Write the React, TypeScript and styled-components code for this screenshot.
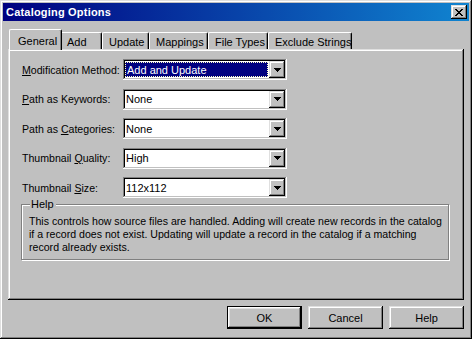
import React from "react";
import styled, { createGlobalStyle } from "styled-components";

const GlobalStyle = createGlobalStyle`
  html, body {
    margin: 0;
    padding: 0;
    background: #c0c0c0;
  }
  * {
    box-sizing: border-box;
  }
`;

// raised 3d edge used by the window, buttons and the combo arrow
const raised = `
  box-shadow: inset -1px -1px #000, inset 1px 1px #dfdfdf,
    inset -2px -2px #808080, inset 2px 2px #fff;
`;

const Window = styled.div`
  width: 472px;
  height: 339px;
  padding: 3px;
  background: #c0c0c0;
  display: flex;
  flex-direction: column;
  font-family: "Liberation Sans", Arial, sans-serif;
  font-size: 11px;
  color: #000;
  ${raised}
`;

const TitleBar = styled.div`
  height: 18px;
  flex: none;
  display: flex;
  align-items: center;
  justify-content: space-between;
  padding: 0 2px 0 3px;
  background: linear-gradient(90deg, #000080, #1084d0);
`;

const Title = styled.span`
  color: #fff;
  font-weight: bold;
  font-size: 11px;
  letter-spacing: 0.2px;
`;

const CloseButton = styled.div`
  width: 16px;
  height: 14px;
  background: #c0c0c0;
  display: flex;
  align-items: center;
  justify-content: center;
  padding-right: 1px;
  ${raised}
`;

const Body = styled.div`
  flex: 1;
  display: flex;
  flex-direction: column;
  padding: 8px 5px 7px;
`;

const TabStrip = styled.div`
  height: 20px;
  display: flex;
  align-items: flex-end;
  padding-left: 3px;
  position: relative;
  z-index: 1;
`;

const Tab = styled.div<{ $w: number; $active?: boolean }>`
  width: ${(p) => p.$w + (p.$active ? 4 : 0)}px;
  height: ${(p) => (p.$active ? 21 : 17)}px;
  margin: ${(p) => (p.$active ? "0 -2px -1px" : "0")};
  padding: ${(p) => (p.$active ? "2px 0 0 8px" : "1px 0 0 6px")};
  background: #c0c0c0;
  border-top: 1px solid #fff;
  border-left: 1px solid #fff;
  border-right: 1px solid #000;
  border-top-left-radius: 2px;
  border-top-right-radius: 2px;
  box-shadow: inset -1px 0 #808080;
  display: flex;
  align-items: center;
  white-space: nowrap;
  z-index: ${(p) => (p.$active ? 2 : 1)};
`;

const Panel = styled.div`
  height: 251px;
  flex: none;
  display: flex;
  flex-direction: column;
  padding: 10px 14px 0 13px;
  background: #c0c0c0;
  ${raised}
`;

const Form = styled.div`
  display: grid;
  grid-template-columns: 102px 164px;
  grid-auto-rows: 21px;
  row-gap: 8.5px;
  align-items: center;
`;

const Label = styled.label`
  padding-left: 1px;
  font-size: 10.6px;
  white-space: nowrap;
`;

const Combo = styled.div`
  width: 164px;
  height: 21px;
  padding: 2px;
  display: flex;
  background: #fff;
  box-shadow: inset -1px -1px #fff, inset 1px 1px #808080,
    inset -2px -2px #c0c0c0, inset 2px 2px #000;
`;

const ComboValue = styled.div<{ $active?: boolean }>`
  flex: 1;
  display: flex;
  align-items: center;
  padding-left: ${(p) => (p.$active ? 2 : 1)}px;
  margin: ${(p) => (p.$active ? "1px 1px 1px 0" : "0")};
  background: ${(p) => (p.$active ? "#000080" : "transparent")};
  color: ${(p) => (p.$active ? "#fff" : "#000")};
  outline: ${(p) => (p.$active ? "1px dotted #ffffc0" : "none")};
  outline-offset: -1px;
`;

const DropButton = styled.div`
  width: 16px;
  height: 17px;
  flex: none;
  background: #c0c0c0;
  display: flex;
  align-items: center;
  justify-content: center;
  ${raised}
`;

const Group = styled.fieldset`
  margin: 0;
  padding: 5px 7px 5px 7px;
  min-width: 0;
  width: 428px;
  border: 1px solid #808080;
  box-shadow: 1px 1px 0 #fff, inset 1px 1px 0 #fff;
`;

const Legend = styled.legend`
  margin-left: 1px;
  padding: 0 2px 0 1px;
  background: #c0c0c0;
  line-height: 12px;
`;

const HelpText = styled.p`
  margin: 0;
  line-height: 13px;
  font-size: 10.6px;
  white-space: nowrap;
`;

const ButtonRow = styled.div`
  display: flex;
  justify-content: flex-end;
  gap: 6px;
  margin-top: 6px;
`;

const Button = styled.div<{ $default?: boolean }>`
  width: 75px;
  height: 23px;
  display: flex;
  align-items: center;
  justify-content: center;
  background: #c0c0c0;
  ${(p) =>
    p.$default
      ? `box-shadow: inset 0 0 0 1px #000, inset -2px -2px #000, inset 2px 2px #fff,
        inset -3px -3px #808080, inset 3px 3px #dfdfdf;`
      : raised}
`;

const U = styled.span`
  text-decoration: underline;
  text-underline-offset: 1px;
`;

const CloseGlyph = () => (
  <svg width="8" height="7" viewBox="0 0 8 7" shapeRendering="crispEdges">
    <path
      d="M0 0h2v1H0zM6 0h2v1H6zM1 1h2v1H1zM5 1h2v1H5zM2 2h4v1H2zM3 3h2v1H3zM2 4h4v1H2zM1 5h2v1H1zM5 5h2v1H5zM0 6h2v1H0zM6 6h2v1H6z"
      fill="#000"
    />
  </svg>
);

const Arrow = () => (
  <svg width="7" height="4" viewBox="0 0 7 4" shapeRendering="crispEdges">
    <path d="M0 0h7v1H0zM1 1h5v1H1zM2 2h3v1H2zM3 3h1v1H3z" fill="#000" />
  </svg>
);

const tabs = [
  { name: "General", w: 49 },
  { name: "Add", w: 42 },
  { name: "Update", w: 47 },
  { name: "Mappings", w: 59 },
  { name: "File Types", w: 60 },
  { name: "Exclude Strings", w: 84 },
];

const fields: { label: React.ReactNode; value: string; active?: boolean }[] = [
  {
    label: (
      <>
        <U>M</U>odification Method:
      </>
    ),
    value: "Add and Update",
    active: true,
  },
  {
    label: (
      <>
        <U>P</U>ath as Keywords:
      </>
    ),
    value: "None",
  },
  {
    label: (
      <>
        Path as <U>C</U>ategories:
      </>
    ),
    value: "None",
  },
  {
    label: (
      <>
        Thumbnail <U>Q</U>uality:
      </>
    ),
    value: "High",
  },
  {
    label: (
      <>
        Thumbnail <U>S</U>ize:
      </>
    ),
    value: "112x112",
  },
];

export default function App() {
  return (
    <>
      <GlobalStyle />
      <Window>
        <TitleBar>
          <Title>Cataloging Options</Title>
          <CloseButton>
            <CloseGlyph />
          </CloseButton>
        </TitleBar>
        <Body>
          <TabStrip>
            {tabs.map((t, i) => (
              <Tab key={t.name} $w={t.w} $active={i === 0}>
                {t.name}
              </Tab>
            ))}
          </TabStrip>
          <Panel>
            <Form>
              {fields.map((f, i) => (
                <React.Fragment key={i}>
                  <Label>{f.label}</Label>
                  <Combo>
                    <ComboValue $active={f.active}>{f.value}</ComboValue>
                    <DropButton>
                      <Arrow />
                    </DropButton>
                  </Combo>
                </React.Fragment>
              ))}
            </Form>
            <Group>
              <Legend>Help</Legend>
              <HelpText>
                This controls how source files are handled. Adding will create new records in the catalog
                <br />
                if a record does not exist. Updating will update a record in the catalog if a matching
                <br />
                record already exists.
              </HelpText>
            </Group>
          </Panel>
          <ButtonRow>
            <Button $default>OK</Button>
            <Button>Cancel</Button>
            <Button>Help</Button>
          </ButtonRow>
        </Body>
      </Window>
    </>
  );
}
